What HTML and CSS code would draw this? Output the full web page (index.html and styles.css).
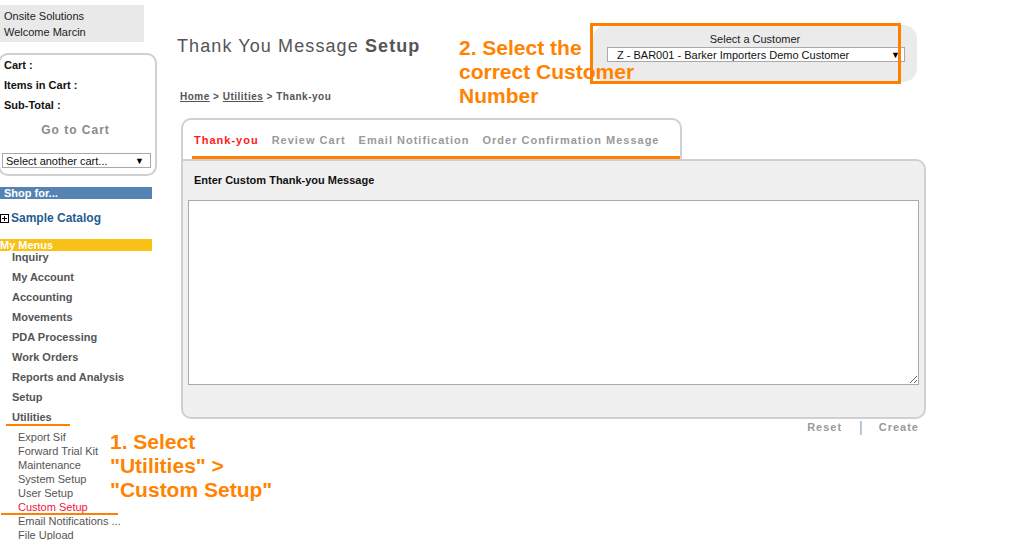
FILE: index.html
```html
<!DOCTYPE html>
<html>
<head>
<meta charset="utf-8">
<title>Thank You Message Setup</title>
<link rel="stylesheet" href="styles.css">
</head>
<body>
<div class="layout">
  <aside class="sidebar">
    <div class="brand">
      <div>Onsite Solutions</div>
      <div>Welcome Marcin</div>
    </div>
    <div class="cart">
      <div class="cart-line">Cart :</div>
      <div class="cart-line">Items in Cart :</div>
      <div class="cart-line">Sub-Total :</div>
      <div class="goto">Go to Cart</div>
      <div class="fake-select cart-select"><span>Select another cart...</span><span class="arrow">&#9660;</span></div>
    </div>
    <div class="bar bar-blue">Shop for...</div>
    <div class="catalog">
      <svg class="plus" width="9" height="9" viewBox="0 0 9 9"><rect x="0.5" y="0.5" width="8" height="8" fill="#fff" stroke="#000"/><path d="M2 4.5H7M4.5 2V7" stroke="#000" stroke-width="1"/></svg>
      <span>Sample Catalog</span>
    </div>
    <div class="bar bar-gold">My Menus</div>
    <ul class="menu">
      <li>Inquiry</li>
      <li>My Account</li>
      <li>Accounting</li>
      <li>Movements</li>
      <li>PDA Processing</li>
      <li>Work Orders</li>
      <li>Reports and Analysis</li>
      <li>Setup</li>
      <li>Utilities</li>
    </ul>
    <ul class="submenu">
      <li>Export Sif</li>
      <li>Forward Trial Kit</li>
      <li>Maintenance</li>
      <li>System Setup</li>
      <li>User Setup</li>
      <li class="current">Custom Setup</li>
      <li>Email Notifications ...</li>
      <li>File Upload</li>
    </ul>
  </aside>

  <main class="main">
    <div class="header">
      <h1 class="title">Thank You Message <b>Setup</b></h1>
      <div class="customer">
        <div class="customer-label">Select a Customer</div>
        <div class="fake-select cust-select"><span>Z - BAR001 - Barker Importers Demo Customer</span><span class="arrow">&#9660;</span></div>
      </div>
    </div>
    <div class="crumbs"><a>Home</a> &gt; <a>Utilities</a> &gt; Thank-you</div>

    <div class="tabs-box">
      <div class="tabs">
        <span class="tab active">Thank-you</span>
        <span class="tab">Review Cart</span>
        <span class="tab">Email Notification</span>
        <span class="tab">Order Confirmation Message</span>
      </div>
    </div>
    <div class="panel">
      <div class="panel-label">Enter Custom Thank-you Message</div>
      <textarea class="message"></textarea>
    </div>
    <div class="actions">
      <span class="action">Reset</span>
      <span class="sep">|</span>
      <span class="action">Create</span>
    </div>
  </main>
</div>

<div class="note note-1">1. Select<br>"Utilities" &gt;<br>"Custom Setup"</div>
<div class="note note-2">2. Select the<br>correct Customer<br>Number</div>
<div class="mark mark-utilities"></div>
<div class="mark mark-custom"></div>
<div class="frame"></div>
</body>
</html>
```

FILE: styles.css
```css
html {
  overflow: hidden;
}
body {
  margin: 0;
  font-family: "Liberation Sans", Arial, sans-serif;
  color: #222;
  background: #fff;
  position: relative;
  width: 1012px;
  height: 540px;
}
ul {
  list-style: none;
  margin: 0;
  padding: 0;
}
.layout {
  display: flex;
  align-items: flex-start;
}

/* ---------- sidebar ---------- */
.sidebar {
  width: 155px;
  flex-shrink: 0;
  font-size: 11px;
}
.brand {
  width: 140px;
  height: 31px;
  margin-top: 5px;
  padding: 3px 0 3px 4px;
  background: #e9e9e9;
  line-height: 16px;
  color: #222;
}
.cart {
  margin-top: 11px;
  margin-left: -2px;
  width: 153px;
  border: 2px solid #cfcfcf;
  border-radius: 10px;
  padding: 0 0 6px 2px;
  box-sizing: content-box;
}
.cart-line {
  line-height: 20px;
  font-weight: bold;
  color: #111;
  padding-left: 2px;
}
.goto {
  margin-top: 5px;
  line-height: 20px;
  text-align: center;
  font-weight: bold;
  font-size: 12px;
  letter-spacing: 1px;
  color: #8a8a8a;
  padding-right: 6px;
}
.fake-select {
  display: flex;
  justify-content: space-between;
  align-items: center;
  box-sizing: border-box;
  border: 1px solid #a9a9a9;
  background: #fff;
  color: #111;
  font-size: 11px;
}
.fake-select .arrow {
  font-size: 9px;
  color: #000;
}
.cart-select {
  margin-top: 13px;
  width: 149px;
  height: 15px;
  padding: 0 6px 0 3px;
}
.bar {
  width: 152px;
  height: 12px;
  line-height: 12px;
  font-weight: bold;
  color: #fff;
  font-size: 11px;
}
.bar-blue {
  margin-top: 11px;
  background: #5584b4;
  padding-left: 4px;
  box-sizing: border-box;
}
.bar-gold {
  margin-top: 13px;
  background: #f8c117;
}
.catalog {
  margin-top: 11px;
  height: 16px;
  display: flex;
  align-items: center;
  gap: 2px;
  padding-left: 0;
  font-size: 12px;
  font-weight: bold;
  color: #1f5d93;
}
.catalog .plus {
  display: block;
}
.menu li {
  height: 20px;
  line-height: 13px;
  padding-left: 12px;
  font-weight: bold;
  color: #555;
}
.submenu {
  margin-top: -1px;
}
.submenu li {
  line-height: 14px;
  padding-left: 18px;
  color: #555;
}
.submenu li.current {
  color: #f0153d;
}

/* ---------- main ---------- */
.main {
  flex: 1;
  padding-left: 22px;
  padding-top: 25px;
}
.header {
  display: flex;
  align-items: flex-start;
}
.title {
  margin: 10px 0 0 0;
  font-size: 18px;
  line-height: 22px;
  font-weight: normal;
  letter-spacing: 1.1px;
  color: #555;
}
.customer {
  margin-left: auto;
  margin-right: 95px;
  width: 324px;
  height: 57px;
  box-sizing: border-box;
  padding-top: 8px;
  background: #ebebeb;
  border-radius: 14px;
}
.customer-label {
  text-align: center;
  font-size: 11px;
  line-height: 13px;
  color: #222;
}
.cust-select {
  margin: 1px 12px 0 14px;
  height: 15px;
  padding: 0 4px 0 9px;
}
.crumbs {
  margin-top: 9px;
  padding-left: 3px;
  font-size: 10px;
  line-height: 12px;
  font-weight: bold;
  letter-spacing: 0.5px;
  color: #555;
}
.crumbs a {
  text-decoration: underline;
}
.tabs-box {
  margin-top: 15px;
  margin-left: 4px;
  width: 501px;
  box-sizing: border-box;
  border: 2px solid #d0d0d0;
  border-bottom: none;
  border-radius: 10px 10px 0 0;
  background: #fff;
}
.tabs {
  margin-left: 9px;
  padding: 13px 0 9px 2px;
  border-bottom: 3px solid #ff8000;
  display: flex;
  gap: 13px;
}
.tab {
  font-size: 11px;
  line-height: 14px;
  font-weight: bold;
  letter-spacing: 1px;
  color: #9a9a9a;
}
.tab.active {
  color: #ff1a1a;
}
.panel {
  margin-left: 4px;
  width: 745px;
  box-sizing: border-box;
  border: 2px solid #d0d0d0;
  border-radius: 0 10px 10px 10px;
  background: #f0f0f0;
  padding: 12px 5px 32px 5px;
}
.panel-label {
  padding-left: 6px;
  font-size: 11px;
  line-height: 14px;
  font-weight: bold;
  color: #111;
}
.message {
  display: block;
  margin-top: 13px;
  width: 731px;
  height: 185px;
  box-sizing: border-box;
  border: 1px solid #aaa;
  background: #fff;
  padding: 2px;
  font-family: inherit;
}
.actions {
  margin-left: 4px;
  margin-top: 2px;
  width: 745px;
  box-sizing: border-box;
  padding-right: 7px;
  display: flex;
  justify-content: flex-end;
  align-items: center;
  font-size: 11px;
  line-height: 13px;
  font-weight: bold;
  letter-spacing: 1px;
  color: #999;
}
.sep {
  margin: 0 15px 0 17px;
  font-weight: normal;
  color: #90a4bf;
  font-size: 14px;
}

/* ---------- annotations (overlay) ---------- */
.note {
  position: absolute;
  font-size: 21px;
  line-height: 24px;
  font-weight: bold;
  color: #ff8300;
}
.note-1 {
  left: 110px;
  top: 430px;
}
.note-2 {
  left: 459px;
  top: 36px;
}
.mark {
  position: absolute;
  height: 2px;
  background: #ff8000;
}
.mark-utilities {
  left: 6px;
  top: 424px;
  width: 64px;
}
.mark-custom {
  left: 1px;
  top: 513px;
  width: 117px;
}
.frame {
  position: absolute;
  left: 590px;
  top: 23px;
  width: 305px;
  height: 55px;
  border: 3px solid #ff8000;
}
```
